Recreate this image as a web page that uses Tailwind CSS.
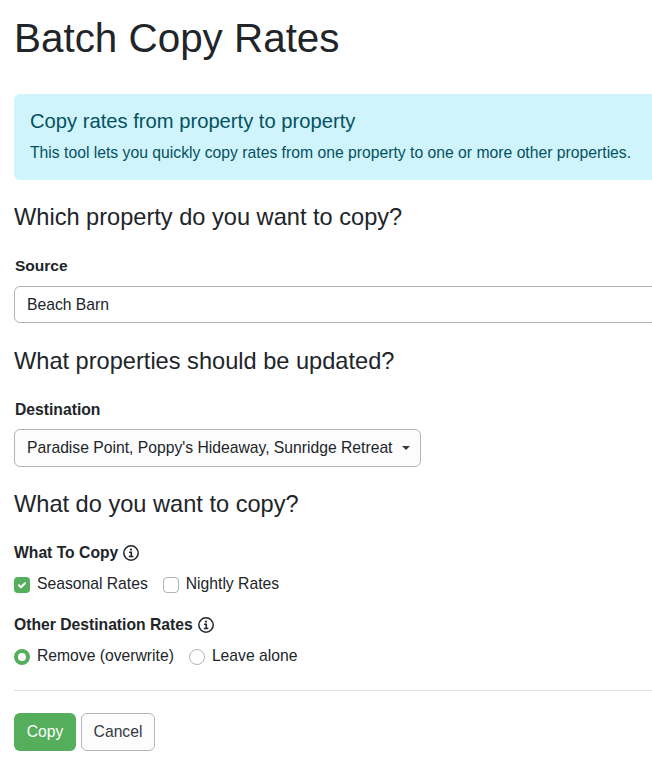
<!DOCTYPE html>
<html lang="en">
<head>
<meta charset="utf-8">
<title>Batch Copy Rates</title>
<script src="https://cdn.jsdelivr.net/npm/@tailwindcss/browser@4"></script>
</head>
<body class="bg-white overflow-hidden font-['Liberation_Sans',Arial,sans-serif] text-[#212529]">
<div class="w-[652px] h-[767px] overflow-hidden">
<div class="w-[720px] pl-[14px] pt-[14px]">
  <h1 class="text-[40.4px] leading-[48px] font-normal mb-[32px]">Batch Copy Rates</h1>
  <div class="bg-[#cff4fc] text-[#055160] rounded-md pl-[16px] pt-[15px] h-[86px] mb-[23px]">
    <h4 class="text-[20.2px] leading-[24px] mb-[9px]">Copy rates from property to property</h4>
    <p class="text-[15.72px] leading-[21px]">This tool lets you quickly copy rates from one property to one or more other properties.</p>
  </div>
  <h4 class="text-[23.6px] leading-[29px] mb-[22px]">Which property do you want to copy?</h4>
  <div class="pl-[1px] leading-[24px] font-bold text-[15.5px] mb-[8px]">Source</div>
  <div class="h-[37px] border border-[#adb5bd] rounded-md flex items-center pl-[12px] text-[15.7px] mb-[24px] bg-white">Beach Barn</div>
  <h4 class="text-[23.6px] leading-[29px] mb-[22px]">What properties should be updated?</h4>
  <div class="pl-[1px] leading-[24px] font-bold text-[15.7px] mb-[7px]">Destination</div>
  <button class="h-[38px] w-[407px] border border-[#adb5bd] rounded-md flex items-center pl-[12px] text-[15.7px] mb-[23px] bg-[#fcfcfd]">
    <span>Paradise Point, Poppy's Hideaway, Sunridge Retreat</span>
    <span class="ml-[10px] w-0 h-0 border-x-[4px] border-x-transparent border-t-[4px] border-t-[#343a40]"></span>
  </button>
  <h4 class="text-[23.6px] leading-[29px] mb-[22px]">What do you want to copy?</h4>
  <div class="flex items-center gap-[5px] leading-[24px] font-bold text-[15.7px] mb-[7px]">What To Copy
    <svg class="w-[16px] h-[16px]" viewBox="0 0 16 16" fill="none" stroke="#212529"><circle cx="8" cy="8" r="7.2" stroke-width="1.5"/><circle cx="8" cy="4.6" r="1.1" fill="#212529" stroke="none"/><path d="M6 7.2H8.3V11.3M5.8 11.5H10.4" stroke-width="1.6"/></svg>
  </div>
  <div class="flex items-center h-[24px] text-[15.7px] mb-[17px]">
    <span class="w-[16px] h-[16px] rounded-[4px] bg-[#55ae5b] mr-[7px] flex items-center justify-center mt-[2px]">
      <svg class="w-[12px] h-[12px]" viewBox="0 0 12 12" fill="none" stroke="#fff" stroke-width="2" stroke-linecap="round" stroke-linejoin="round"><path d="M3 6.3l2 2 4-4"/></svg>
    </span>
    <span>Seasonal Rates</span>
    <span class="w-[16px] h-[16px] rounded-[4px] border border-[#adb5bd] ml-[15px] mr-[7px] mt-[2px]"></span>
    <span>Nightly Rates</span>
  </div>
  <div class="flex items-center gap-[5px] leading-[24px] font-bold text-[15.7px] mb-[7px]">Other Destination Rates
    <svg class="w-[16px] h-[16px]" viewBox="0 0 16 16" fill="none" stroke="#212529"><circle cx="8" cy="8" r="7.2" stroke-width="1.5"/><circle cx="8" cy="4.6" r="1.1" fill="#212529" stroke="none"/><path d="M6 7.2H8.3V11.3M5.8 11.5H10.4" stroke-width="1.6"/></svg>
  </div>
  <div class="flex items-center h-[24px] text-[15.7px] mb-[22px]">
    <span class="w-[16px] h-[16px] rounded-full border-[4px] border-[#55ae5b] bg-white mr-[7px] mt-[2px]"></span>
    <span>Remove (overwrite)</span>
    <span class="w-[16px] h-[16px] rounded-full border border-[#adb5bd] ml-[15px] mr-[7px] mt-[2px]"></span>
    <span>Leave alone</span>
  </div>
  <hr class="border-t border-[#dee2e6] mb-[22px]">
  <div class="flex gap-[5px]">
    <button class="h-[38px] w-[62px] rounded-md bg-[#55ae5b] text-white text-[15.7px]">Copy</button>
    <button class="h-[38px] w-[74px] rounded-md border border-[#adb5bd] bg-[#fcfcfd] text-[#343a40] text-[15.7px]">Cancel</button>
  </div>
</div>
</div>
</body>
</html>
